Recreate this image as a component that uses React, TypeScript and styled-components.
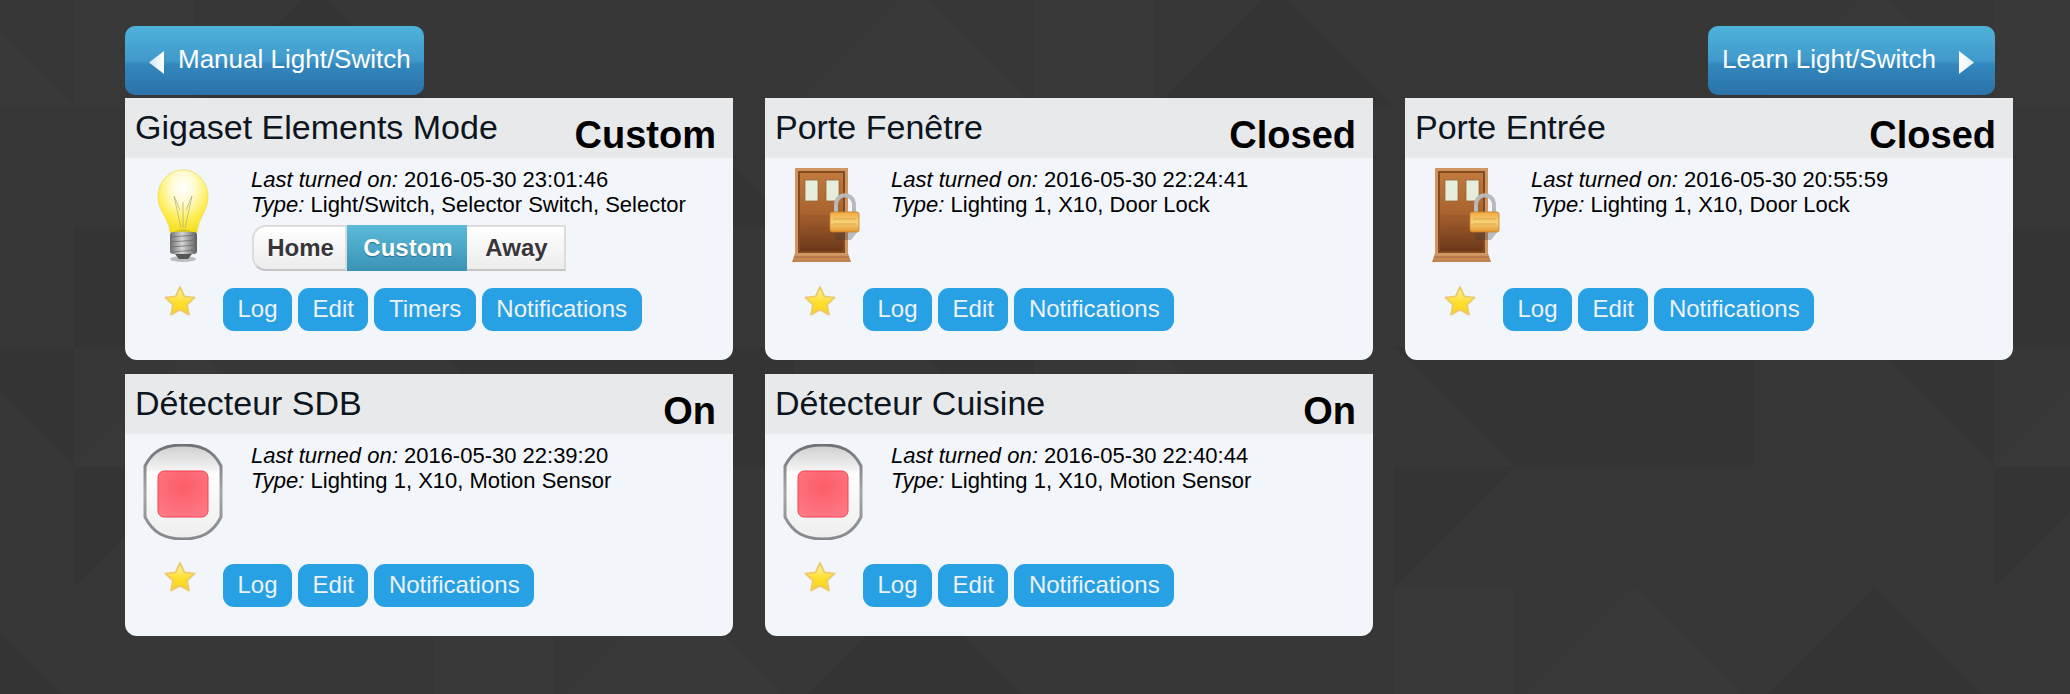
import React from "react";
import styled, { createGlobalStyle } from "styled-components";

const tile = `<svg xmlns='http://www.w3.org/2000/svg' width='960' height='720'>
<g fill='#343434'>
<polygon points='360,240 480,360 720,360 720,240'/>
<polygon points='360,360 480,360 360,480'/>
<polygon points='840,480 720,600 960,600'/>
<polygon points='840,240 960,240 960,360'/>
<polygon points='0,120 120,120 120,240 0,240'/>
<polygon points='0,360 120,360 0,480'/>
<polygon points='240,600 360,720 120,720'/>
<polygon points='600,0 720,120 480,120'/>
</g>
<g fill='#393939'>
<polygon points='360,480 480,480 480,600 360,600'/>
<polygon points='600,480 480,600 720,600'/>
<polygon points='720,120 840,120 840,240 720,240'/>
<polygon points='0,600 120,600 120,720 0,720'/>
<polygon points='120,240 240,360 0,360'/>
<polygon points='840,600 960,720 720,720'/>
</g>
</svg>`;

const GlobalStyle = createGlobalStyle`
  html, body {
    margin: 0;
    padding: 0;
    height: 100%;
    overflow: hidden;
  }
  body {
    font-family: "Liberation Sans", Arial, sans-serif;
    background-color: #373737;
    background-image: url("data:image/svg+xml,${encodeURIComponent(tile)}");
    background-position: 74px 107px;
  }
`;

const Page = styled.div`
  padding: 26px 0 0 125px;
`;

const Nav = styled.div`
  width: 1870px;
  display: flex;
  justify-content: space-between;
  margin-bottom: 3px;
`;

const NavButton = styled.a<{ $width: number; $right?: boolean }>`
  width: ${(p) => p.$width}px;
  height: 69px;
  box-sizing: border-box;
  display: flex;
  align-items: center;
  gap: ${(p) => (p.$right ? 22 : 13)}px;
  padding-left: ${(p) => (p.$right ? 14 : 24)}px;
  padding-bottom: 3px;
  border-radius: 10px;
  background: linear-gradient(#4eb3da 0%, #4199cb 50%, #3287bd 56%, #2b72aa 100%);
  color: #fff;
  font-size: 26px;
  white-space: nowrap;
  svg {
    margin-top: 7px;
    filter: blur(0.5px);
  }
`;

const Grid = styled.div`
  display: grid;
  grid-template-columns: repeat(3, 608px);
  column-gap: 32px;
  row-gap: 14px;
`;

const Card = styled.div`
  background: #f2f5fa;
  border-radius: 0 0 12px 12px;
  overflow: hidden;
  height: 262px;
`;

const CardHeader = styled.div`
  height: 60px;
  background: #e8e9eb;
  display: flex;
  justify-content: space-between;
  padding: 0 17px 0 10px;
`;

const Title = styled.div`
  font-size: 34px;
  line-height: 38px;
  padding-top: 10px;
  color: #0c1520;
`;

const Status = styled.div`
  font-size: 38px;
  font-weight: bold;
  line-height: 42px;
  padding-top: 16px;
  color: #000;
`;

const CardBody = styled.div`
  display: flex;
  height: 130px;
`;

const IconCol = styled.div`
  width: 126px;
  flex: none;
  padding: 10px 0 0 10px;
  box-sizing: border-box;
  svg {
    display: block;
    filter: blur(0.7px);
  }
`;

const Details = styled.div`
  padding-top: 10px;
  font-size: 22px;
  line-height: 24.5px;
  color: #000;
  em {
    font-style: italic;
  }
`;

const Selector = styled.div`
  display: flex;
  height: 46px;
  margin: 8px 0 0 1px;
  width: 314px;
`;

const SelectorItem = styled.div<{ $active?: boolean; $width: number; $first?: boolean }>`
  width: ${(p) => p.$width}px;
  box-sizing: border-box;
  display: flex;
  align-items: center;
  justify-content: center;
  padding-left: 2px;
  font-size: 24px;
  font-weight: bold;
  color: ${(p) => (p.$active ? "#fff" : "#38353a")};
  background: ${(p) =>
    p.$active
      ? "linear-gradient(#5bbbd9, #3a93b5)"
      : "linear-gradient(#ffffff, #ececec)"};
  border: ${(p) => (p.$active ? "none" : "2px solid #dcdcdc")};
  border-bottom-color: ${(p) => (p.$active ? "transparent" : "#c4c4c4")};
  border-left: ${(p) => (p.$first ? "2px solid #dcdcdc" : "none")};
  border-radius: ${(p) => (p.$first ? "14px 0 0 14px" : "0")};
  text-shadow: ${(p) => (p.$active ? "0 1px 1px #2a6f8c" : "0 1px 1px #ffffff")};
`;

const Actions = styled.div`
  display: flex;
  align-items: flex-start;
`;

const StarCol = styled.div`
  width: 98px;
  flex: none;
  padding: 0 0 0 39px;
  box-sizing: border-box;
  margin-top: -3px;
  svg {
    display: block;
    filter: blur(0.5px);
  }
`;

const ButtonRow = styled.div`
  display: flex;
  gap: 6px;
`;

const ActionButton = styled.a`
  height: 43px;
  box-sizing: border-box;
  display: flex;
  align-items: center;
  padding: 0 14.5px 2px;
  border-radius: 11px;
  background: #27a1e4;
  color: #eef2f6;
  font-size: 24px;
`;

const HiddenDefs = styled.svg`
  position: absolute;
  width: 0;
  height: 0;
`;

const IconDefs = () => (
  <HiddenDefs aria-hidden="true">
    <defs>
      <radialGradient id="glass" cx="50%" cy="28%" r="72%">
        <stop offset="0%" stopColor="#ffffff" />
        <stop offset="35%" stopColor="#fffbd0" />
        <stop offset="70%" stopColor="#ffee55" />
        <stop offset="100%" stopColor="#f3de1c" />
      </radialGradient>
      <linearGradient id="screw" x1="0" x2="1" y1="0" y2="0">
        <stop offset="0%" stopColor="#6e6e6e" />
        <stop offset="45%" stopColor="#d6d6d6" />
        <stop offset="100%" stopColor="#5e5e5e" />
      </linearGradient>
      <linearGradient id="doorWood" x1="0" x2="0" y1="0" y2="1">
        <stop offset="0%" stopColor="#c07a3e" />
        <stop offset="50%" stopColor="#a9632f" />
        <stop offset="100%" stopColor="#6a3718" />
      </linearGradient>
      <linearGradient id="doorStep" x1="0" x2="0" y1="0" y2="1">
        <stop offset="0%" stopColor="#d39b68" />
        <stop offset="100%" stopColor="#bf7f4a" />
      </linearGradient>
      <linearGradient id="lockBody" x1="0" x2="0" y1="0" y2="1">
        <stop offset="0%" stopColor="#f2a93f" />
        <stop offset="50%" stopColor="#f8d27a" />
        <stop offset="100%" stopColor="#e69a32" />
      </linearGradient>
      <linearGradient id="sensorRim" x1="0" x2="0" y1="0" y2="1">
        <stop offset="0%" stopColor="#6f7275" />
        <stop offset="50%" stopColor="#a5a7a9" />
        <stop offset="100%" stopColor="#85878a" />
      </linearGradient>
      <linearGradient id="sensorFace" x1="0" x2="0" y1="0" y2="1">
        <stop offset="0%" stopColor="#cfcfcf" />
        <stop offset="27%" stopColor="#f4f4f4" />
        <stop offset="29%" stopColor="#ffffff" />
        <stop offset="100%" stopColor="#eeeeee" />
      </linearGradient>
      <radialGradient id="sensorRed" cx="50%" cy="35%" r="75%">
        <stop offset="0%" stopColor="#fb5c68" />
        <stop offset="100%" stopColor="#ff7a85" />
      </radialGradient>
      <linearGradient id="starFill" x1="0" x2="0" y1="0" y2="1">
        <stop offset="0%" stopColor="#fff4b0" />
        <stop offset="55%" stopColor="#ffe02e" />
        <stop offset="100%" stopColor="#f8d21c" />
      </linearGradient>
      <linearGradient id="arrowFill" x1="0" x2="1" y1="0" y2="0">
        <stop offset="0%" stopColor="#cfe6f5" />
        <stop offset="100%" stopColor="#ffffff" />
      </linearGradient>
      <linearGradient id="arrowFillRight" x1="0" x2="1" y1="0" y2="0">
        <stop offset="0%" stopColor="#ffffff" />
        <stop offset="100%" stopColor="#e4f0f8" />
      </linearGradient>
    </defs>
  </HiddenDefs>
);

const BulbIcon = () => (
  <svg width="96" height="96" viewBox="0 0 96 96">
    <ellipse cx="48" cy="91" rx="13" ry="3" fill="#8d8d8d" opacity="0.55" />
    <path
      d="M48 2C62 2 73 14 73 29C73 43 63 50 62 65L35 65C34 50 23 43 23 29C23 14 34 2 48 2Z"
      fill="url(#glass)"
      stroke="#f1e16e"
      strokeWidth="1"
    />
    <path
      d="M48 60L48 34M46 60L39 28M50 60L57 28M39 28L45 42M57 28L51 42"
      fill="none"
      stroke="#a9a77c"
      strokeWidth="0.9"
      opacity="0.75"
    />
    <path d="M38 65C42 60 54 60 59 65Z" fill="#c4bd2e" opacity="0.7" />
    <rect x="35" y="64" width="27" height="22" rx="3" fill="url(#screw)" />
    <path d="M35 69L62 67M35 74L62 72M35 79L62 77M36 84L61 82" stroke="#666" strokeWidth="1.2" opacity="0.7" />
    <path d="M40 86L57 86L53 91L44 91Z" fill="#555" />
  </svg>
);

const DoorIcon = () => (
  <svg width="96" height="96" viewBox="0 0 96 96">
    <rect x="20" y="0" width="53" height="86" fill="#cf9563" />
    <rect x="23" y="3" width="47" height="82" fill="#84491f" />
    <rect x="25" y="5" width="43" height="78" fill="url(#doorWood)" />
    <rect x="30" y="12" width="13" height="21" fill="#e6eedb" stroke="#96633a" strokeWidth="0.8" />
    <rect x="51" y="12" width="13" height="21" fill="#e6eedb" stroke="#96633a" strokeWidth="0.8" />
    <path d="M29 48H62M29 60H62" stroke="#8a4b22" strokeWidth="1" opacity="0.5" />
    <path d="M20 85H73L76 94H17Z" fill="url(#doorStep)" />
    <path d="M19 89H74" stroke="#a5663a" strokeWidth="1" />
    <path d="M56 62H84L76 72H62Z" fill="#3c3a3a" opacity="0.3" />
    <path
      d="M61 45V37C61 24 79 24 79 37V45"
      fill="none"
      stroke="#b8babc"
      strokeWidth="4"
    />
    <rect x="55" y="44" width="29" height="20" rx="2" fill="url(#lockBody)" stroke="#c8822a" strokeWidth="0.8" />
    <path d="M58 51H81M58 56H81" stroke="#e2a748" strokeWidth="1" />
  </svg>
);

const SensorIcon = () => (
  <svg width="96" height="96" viewBox="0 0 96 96">
    <path
      d="M10 22C18 6 30 1 48 1C66 1 78 6 86 22L86 73C78 89 66 95 48 95C30 95 18 89 10 73Z"
      fill="url(#sensorFace)"
      stroke="url(#sensorRim)"
      strokeWidth="3"
    />
    <rect x="23" y="27" width="50" height="46" rx="6" fill="url(#sensorRed)" stroke="#f2434f" strokeWidth="1" />
  </svg>
);

const StarIcon = () => (
  <svg width="32" height="32" viewBox="0 0 32 32">
    <path
      d="M16 2L20.4 11.4L30.6 12.7L23 19.6L25 29.6L16 24.6L7 29.6L9 19.6L1.4 12.7L11.6 11.4Z"
      fill="url(#starFill)"
      stroke="#efc96a"
      strokeWidth="1.8"
      strokeLinejoin="round"
    />
  </svg>
);

const ArrowLeft = () => (
  <svg width="16" height="23" viewBox="0 0 16 23">
    <path d="M15 0L15 23L0 11.5Z" fill="url(#arrowFill)" />
  </svg>
);

const ArrowRight = () => (
  <svg width="16" height="23" viewBox="0 0 16 23">
    <path d="M1 0L1 23L16 11.5Z" fill="url(#arrowFillRight)" />
  </svg>
);

type Device = {
  title: string;
  status: string;
  lastOn: string;
  type: string;
  icon: React.ReactNode;
  buttons: string[];
  selector?: boolean;
};

const devices: Device[] = [
  {
    title: "Gigaset Elements Mode",
    status: "Custom",
    lastOn: "2016-05-30 23:01:46",
    type: "Light/Switch, Selector Switch, Selector",
    icon: <BulbIcon />,
    buttons: ["Log", "Edit", "Timers", "Notifications"],
    selector: true,
  },
  {
    title: "Porte Fenêtre",
    status: "Closed",
    lastOn: "2016-05-30 22:24:41",
    type: "Lighting 1, X10, Door Lock",
    icon: <DoorIcon />,
    buttons: ["Log", "Edit", "Notifications"],
  },
  {
    title: "Porte Entrée",
    status: "Closed",
    lastOn: "2016-05-30 20:55:59",
    type: "Lighting 1, X10, Door Lock",
    icon: <DoorIcon />,
    buttons: ["Log", "Edit", "Notifications"],
  },
  {
    title: "Détecteur SDB",
    status: "On",
    lastOn: "2016-05-30 22:39:20",
    type: "Lighting 1, X10, Motion Sensor",
    icon: <SensorIcon />,
    buttons: ["Log", "Edit", "Notifications"],
  },
  {
    title: "Détecteur Cuisine",
    status: "On",
    lastOn: "2016-05-30 22:40:44",
    type: "Lighting 1, X10, Motion Sensor",
    icon: <SensorIcon />,
    buttons: ["Log", "Edit", "Notifications"],
  },
];

const App = () => {
  return (
    <Page>
      <GlobalStyle />
      <IconDefs />
      <Nav>
        <NavButton $width={299}>
          <ArrowLeft />
          Manual Light/Switch
        </NavButton>
        <NavButton $width={287} $right>
          Learn Light/Switch
          <ArrowRight />
        </NavButton>
      </Nav>
      <Grid>
        {devices.map((d) => (
          <Card key={d.title}>
            <CardHeader>
              <Title>{d.title}</Title>
              <Status>{d.status}</Status>
            </CardHeader>
            <CardBody>
              <IconCol>{d.icon}</IconCol>
              <Details>
                <div>
                  <em>Last turned on:</em> {d.lastOn}
                </div>
                <div>
                  <em>Type:</em> {d.type}
                </div>
                {d.selector && (
                  <Selector>
                    <SelectorItem $width={95} $first>
                      Home
                    </SelectorItem>
                    <SelectorItem $width={120} $active>
                      Custom
                    </SelectorItem>
                    <SelectorItem $width={99}>Away</SelectorItem>
                  </Selector>
                )}
              </Details>
            </CardBody>
            <Actions>
              <StarCol>
                <StarIcon />
              </StarCol>
              <ButtonRow>
                {d.buttons.map((b) => (
                  <ActionButton key={b}>{b}</ActionButton>
                ))}
              </ButtonRow>
            </Actions>
          </Card>
        ))}
      </Grid>
    </Page>
  );
};

export default App;
